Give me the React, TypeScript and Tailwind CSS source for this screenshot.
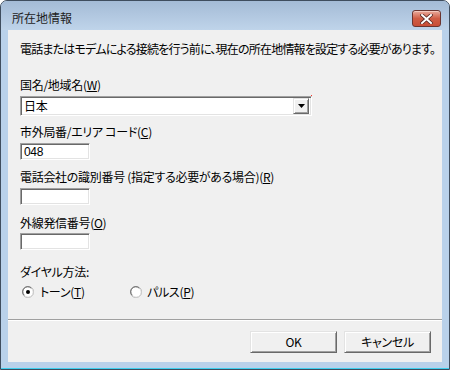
import React from 'react'

const jp = "font-['Noto_Sans_CJK_JP','Noto_Sans',sans-serif] [font-feature-settings:'palt']"

function Key({ k }: { k: string }) {
  return (
    <>
      (<span className="underline underline-offset-[1px]">{k}</span>)
    </>
  )
}

function EditBox({ value }: { value?: string }) {
  return (
    <div className="w-[70px] h-[17px] bg-white border border-t-[#a0a0a0] border-l-[#a0a0a0] border-b-white border-r-white shadow-[inset_1px_1px_0_#696969,inset_-1px_-1px_0_#e3e3e3] flex items-center pl-[3px] text-[12px] leading-none font-['Liberation_Sans',sans-serif] text-black">
      {value}
    </div>
  )
}

function Radio({ checked }: { checked?: boolean }) {
  return (
    <svg width="12" height="12" viewBox="0 0 12 12" className="shrink-0">
      <circle cx="6" cy="6" r="5.5" fill="#fff" stroke="#a0a0a0" />
      <path d="M2.2 9.2 A4.5 4.5 0 0 1 9.2 2.2" fill="none" stroke="#696969" />
      <path d="M9.8 2.8 A4.5 4.5 0 0 1 2.8 9.8" fill="none" stroke="#e3e3e3" />
      {checked && <circle cx="6" cy="6" r="2" fill="#000" />}
    </svg>
  )
}

function Button({ children }: { children: React.ReactNode }) {
  return (
    <button className="w-[87px] h-[22px] bg-[#f0f0f0] border border-t-[#e3e3e3] border-l-[#e3e3e3] border-b-[#696969] border-r-[#696969] shadow-[inset_1px_1px_0_#fff,inset_-1px_-1px_0_#a0a0a0] text-[12px] leading-none text-black">
      {children}
    </button>
  )
}

export default function App() {
  return (
    <div className={`w-[450px] h-[370px] flex flex-col rounded-t-[7px] border border-[#3f4d5e] bg-[#b9d1ea] overflow-hidden ${jp}`}>
      {/* Title bar */}
      <div className="h-[29px] shrink-0 flex items-start justify-between bg-gradient-to-b from-[#a4bbd6] to-[#bfd4ea]">
        <span className="mt-[9px] ml-[11px] text-[12px] leading-[16px] text-[#1e1e1e]">所在地情報</span>
        <div className="mt-[9px] mr-[8px] w-[29px] h-[17px] rounded-[3px] border border-[#6b3530] bg-gradient-to-b from-[#e8aa9c] via-[#cf5d45] to-[#c84e37] flex items-center justify-center shadow-[inset_0_1px_0_#f3c8bd]">
          <svg width="13" height="10" viewBox="0 0 13 10">
            <path d="M2 1 L11 9 M11 1 L2 9" stroke="#5a2a25" strokeWidth="3.6" strokeLinecap="square" />
            <path d="M2 1 L11 9 M11 1 L2 9" stroke="#fff" strokeWidth="2" strokeLinecap="square" />
          </svg>
        </div>
      </div>

      {/* Client area */}
      <div className="mx-[7px] h-[332px] shrink-0 bg-[#f0f0f0] flex flex-col text-[12px] leading-[14px] text-black tracking-[-0.3px]">
        <div className="px-[12px] flex flex-col">
          <p className="mt-[12px] tracking-[-0.8px] whitespace-nowrap">電話またはモデムによる接続を行う前に、現在の所在地情報を設定する必要があります。</p>

          <p className="mt-[22px]">国名/地域名<Key k="W" /></p>
          <div className="mt-[4px] w-[292px] h-[20px] bg-white border border-t-[#a0a0a0] border-l-[#a0a0a0] border-b-white border-r-white shadow-[inset_1px_1px_0_#696969,inset_-1px_-1px_0_#e3e3e3] flex items-center relative">
            <span className="pl-[3px] flex-1">日本</span>
            <div className="mr-[2px] w-[16px] h-[16px] bg-[#f0f0f0] border border-t-[#e3e3e3] border-l-[#e3e3e3] border-b-[#696969] border-r-[#696969] shadow-[inset_1px_1px_0_#fff,inset_-1px_-1px_0_#a0a0a0] flex items-center justify-center">
              <svg width="7" height="4" viewBox="0 0 7 4"><path d="M0 0 H7 L3.5 4 Z" fill="#000" /></svg>
            </div>
            <span className="absolute -top-[2px] -right-[1px] w-[1px] h-[1px] bg-[#ff3b30]" />
          </div>

          <p className="mt-[9px]">市外局番/エリア コード<Key k="C" /></p>
          <div className="mt-[4px]"><EditBox value="048" /></div>

          <p className="mt-[10px]">電話会社の識別番号 (指定する必要がある場合)<Key k="R" /></p>
          <div className="mt-[4px]"><EditBox /></div>

          <p className="mt-[11px]">外線発信番号<Key k="O" /></p>
          <div className="mt-[3px]"><EditBox /></div>

          <p className="mt-[15px]">ダイヤル方法:</p>
          <div className="mt-[6px] flex items-center">
            <div className="w-[110px] flex items-center gap-[6px] pl-[2px]">
              <Radio checked />
              <span>トーン<Key k="T" /></span>
            </div>
            <div className="flex items-center gap-[5px]">
              <Radio />
              <span>パルス<Key k="P" /></span>
            </div>
          </div>
        </div>

        <div className="mt-[20px] h-[2px] border-t border-[#a0a0a0] border-b border-b-white" />

        <div className="mt-[10px] flex justify-end gap-[7px] pr-[11px]">
          <Button>OK</Button>
          <Button>キャンセル</Button>
        </div>
      </div>

      <div className="flex-1" />
      <div className="h-[1px] bg-[#3ecfee]" />
    </div>
  )
}
